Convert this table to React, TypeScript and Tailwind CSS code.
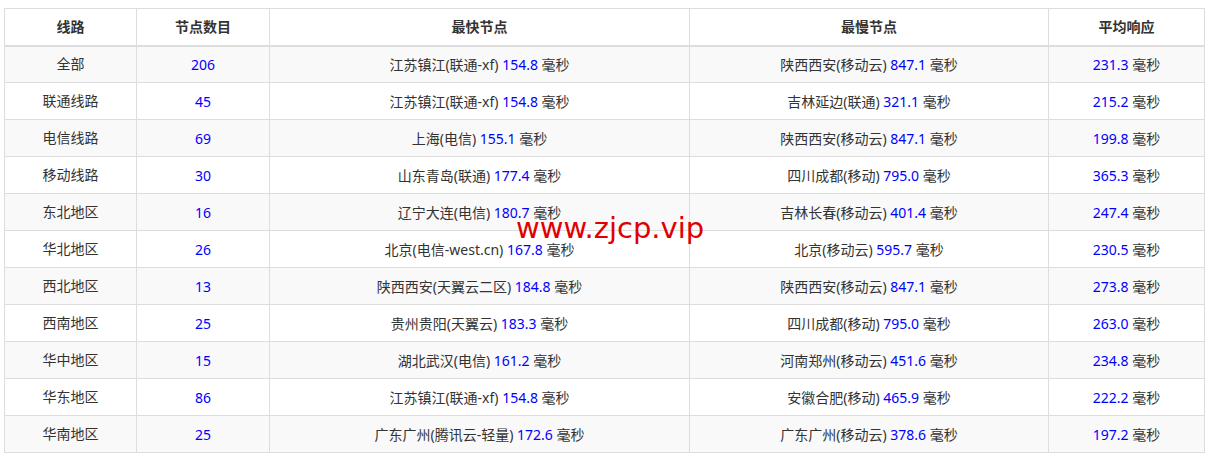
import React from 'react';

type Row = {
  line: string;
  count: number;
  fastName: string;
  fastMs: string;
  slowName: string;
  slowMs: string;
  avg: string;
};

const rows: Row[] = [
  { line: '全部', count: 206, fastName: '江苏镇江(联通-xf)', fastMs: '154.8', slowName: '陕西西安(移动云)', slowMs: '847.1', avg: '231.3' },
  { line: '联通线路', count: 45, fastName: '江苏镇江(联通-xf)', fastMs: '154.8', slowName: '吉林延边(联通)', slowMs: '321.1', avg: '215.2' },
  { line: '电信线路', count: 69, fastName: '上海(电信)', fastMs: '155.1', slowName: '陕西西安(移动云)', slowMs: '847.1', avg: '199.8' },
  { line: '移动线路', count: 30, fastName: '山东青岛(联通)', fastMs: '177.4', slowName: '四川成都(移动)', slowMs: '795.0', avg: '365.3' },
  { line: '东北地区', count: 16, fastName: '辽宁大连(电信)', fastMs: '180.7', slowName: '吉林长春(移动云)', slowMs: '401.4', avg: '247.4' },
  { line: '华北地区', count: 26, fastName: '北京(电信-west.cn)', fastMs: '167.8', slowName: '北京(移动云)', slowMs: '595.7', avg: '230.5' },
  { line: '西北地区', count: 13, fastName: '陕西西安(天翼云二区)', fastMs: '184.8', slowName: '陕西西安(移动云)', slowMs: '847.1', avg: '273.8' },
  { line: '西南地区', count: 25, fastName: '贵州贵阳(天翼云)', fastMs: '183.3', slowName: '四川成都(移动)', slowMs: '795.0', avg: '263.0' },
  { line: '华中地区', count: 15, fastName: '湖北武汉(电信)', fastMs: '161.2', slowName: '河南郑州(移动云)', slowMs: '451.6', avg: '234.8' },
  { line: '华东地区', count: 86, fastName: '江苏镇江(联通-xf)', fastMs: '154.8', slowName: '安徽合肥(移动)', slowMs: '465.9', avg: '222.2' },
  { line: '华南地区', count: 25, fastName: '广东广州(腾讯云-轻量)', fastMs: '172.6', slowName: '广东广州(移动云)', slowMs: '378.6', avg: '197.2' },
];

const headers = ['线路', '节点数目', '最快节点', '最慢节点', '平均响应'];

function Ms({ value }: { value: string }) {
  return (
    <>
      <span className="text-[#0000ff]">{value}</span> 毫秒
    </>
  );
}

export default function App() {
  return (
    <div
      className="relative w-[1221px] h-[465px] bg-white pt-[8px] pl-[4px] text-[14px] text-[#333]"
      style={{ fontFamily: '"Noto Sans", "Noto Sans CJK SC", sans-serif' }}
    >
      <table className="w-[1200px] border-collapse table-fixed">
        <colgroup>
          <col className="w-[132px]" />
          <col className="w-[133px]" />
          <col className="w-[420px]" />
          <col className="w-[359px]" />
          <col className="w-[156px]" />
        </colgroup>
        <thead>
          <tr className="bg-white">
            {headers.map((h) => (
              <th
                key={h}
                className="h-[37px] p-0 text-center font-bold border border-[#ddd] border-b-2 leading-[20px]"
              >
                {h}
              </th>
            ))}
          </tr>
        </thead>
        <tbody>
          {rows.map((r, i) => (
            <tr key={r.line} className={i % 2 === 0 ? 'bg-[#f9f9f9]' : 'bg-white'}>
              <td className="h-[37px] p-0 text-center border border-[#ddd] leading-[20px]">{r.line}</td>
              <td className="p-0 text-center border border-[#ddd] text-[#0000ff]">{r.count}</td>
              <td className="p-0 text-center border border-[#ddd]">
                {r.fastName} <Ms value={r.fastMs} />
              </td>
              <td className="p-0 text-center border border-[#ddd]">
                {r.slowName} <Ms value={r.slowMs} />
              </td>
              <td className="p-0 text-center border border-[#ddd]">
                <Ms value={r.avg} />
              </td>
            </tr>
          ))}
        </tbody>
      </table>

      {/* watermark */}
      <div
        className="absolute left-[516px] top-[214px] text-[29px] leading-[29px] text-[#e00000] pointer-events-none"
        style={{ fontFamily: '"DejaVu Sans", sans-serif' }}
      >
        www.zjcp.vip
      </div>
    </div>
  );
}
